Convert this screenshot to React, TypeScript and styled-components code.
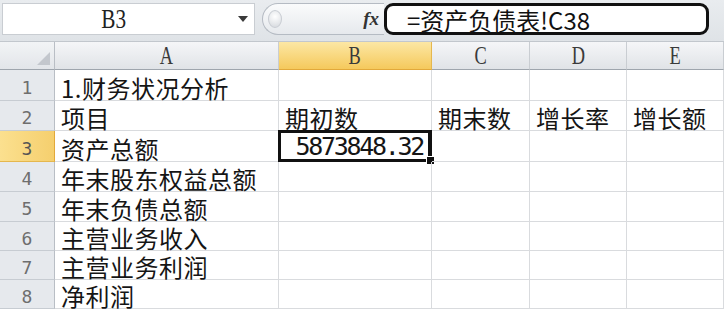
import React, { FC } from "react"
import styled, { createGlobalStyle, css } from "styled-components"

const GlobalStyle = createGlobalStyle`
  html, body {
    margin: 0;
    padding: 0;
    background: #ffffff;
    overflow: hidden;
  }
`

const cjk = `"Noto Sans CJK SC", "Noto Sans", sans-serif`
const latinSerif = `"Liberation Serif", "DejaVu Serif", serif`

const Window = styled.div`
  width: 724px;
  height: 312px;
  display: flex;
  flex-direction: column;
  overflow: hidden;
  background: #ffffff;
`

const FormulaBar = styled.div`
  height: 42px;
  flex: none;
  box-sizing: border-box;
  padding: 3px 15px 6px 2px;
  display: flex;
  align-items: stretch;
  background: linear-gradient(#e9ecef, #dfe3e7);
  border-bottom: 1px solid #c2c7cd;
`

const NameBox = styled.div`
  width: 253px;
  box-sizing: border-box;
  background: #ffffff;
  border: 1px solid #c9cdd2;
  display: flex;
  align-items: center;
  font-family: ${latinSerif};
  font-size: 25px;
  color: #222;
`

const NameText = styled.span`
  flex: 1;
  text-align: center;
  padding-right: 16px;
  transform: scale(0.85, 1.1);
`

const DropArrow = styled.span`
  width: 0;
  height: 0;
  margin-right: 6px;
  border-left: 5px solid transparent;
  border-right: 5px solid transparent;
  border-top: 6px solid #3a3a3a;
`

const FxPill = styled.div`
  margin-left: 7px;
  width: 122px;
  box-sizing: border-box;
  border: 1px solid #b5bbc3;
  border-right: none;
  border-radius: 17px 0 0 17px;
  background: linear-gradient(#fafbfc, #e6e9ed);
  display: flex;
  align-items: center;
  justify-content: space-between;
  padding: 0 5px 0 5px;
`

const Knob = styled.span`
  width: 12px;
  height: 16px;
  border-radius: 50%;
  background: radial-gradient(circle at 50% 35%, #ffffff, #d3d7dc);
  border: 1px solid #c8ccd2;
`

const FxLabel = styled.span`
  font-family: "Liberation Serif", "DejaVu Serif", serif;
  font-style: italic;
  font-weight: bold;
  font-size: 19px;
  color: #333;
`

const FormulaInput = styled.div`
  flex: 1;
  background: #ffffff;
  border: 3px solid #111111;
  border-radius: 9px;
  display: flex;
  align-items: center;
  padding-left: 20px;
  font-family: ${cjk};
  font-size: 24px;
  color: #111;
`

const Sheet = styled.div`
  display: grid;
  grid-template-columns: 55px 224px 153px 98px 97px 97px;
  grid-template-rows: 28px 31px 30px 31px 30px 30px 29px 29px 29px;
  position: relative;
`

const headerBase = css`
  box-sizing: border-box;
  display: flex;
  align-items: center;
  justify-content: center;
  color: #4d4d4d;
`

const CornerCell = styled.div`
  ${headerBase};
  position: relative;
  background: linear-gradient(#f2f4f6, #e2e5e9);
  border-right: 1px solid #b9bec5;
  border-bottom: 1px solid #9ea5ad;
  &::after {
    content: "";
    position: absolute;
    right: 4px;
    bottom: 4px;
    width: 13px;
    height: 13px;
    background: #c3c7cd;
    clip-path: polygon(100% 0, 100% 100%, 0 100%);
  }
`

const ColHeader = styled.div<{ $active?: boolean }>`
  ${headerBase};
  font-family: ${latinSerif};
  font-size: 23px;
  color: #3a3a3a;
  background: ${({ $active }) =>
    $active
      ? "linear-gradient(#fce7a4, #f5c95c)"
      : "linear-gradient(#f5f6f8, #e0e3e7)"};
  border-right: 1px solid ${({ $active }) => ($active ? "#e5b74e" : "#c9cdd2")};
  border-bottom: 1px solid ${({ $active }) => ($active ? "#e2a93a" : "#9ea5ad")};
  span {
    padding-top: 2px;
    transform: scale(0.8, 1.05);
  }
`

const RowHeader = styled.div<{ $active?: boolean }>`
  ${headerBase};
  font-family: "DejaVu Sans Mono", monospace;
  font-size: 18px;
  padding-top: 4px;
  color: ${({ $active }) => ($active ? "#555" : "#6e6e6e")};
  background: ${({ $active }) =>
    $active ? "linear-gradient(90deg, #fbe08f, #f5cf6e)" : "#e6e9ed"};
  border-right: 1px solid ${({ $active }) => ($active ? "#e2a93a" : "#b9bec5")};
  border-bottom: 1px solid ${({ $active }) => ($active ? "#e5b74e" : "#c7ccd2")};
`

const Cell = styled.div<{ $align?: "left" | "right"; $selected?: boolean }>`
  box-sizing: border-box;
  position: relative;
  display: flex;
  align-items: flex-end;
  justify-content: ${({ $align }) => ($align === "right" ? "flex-end" : "flex-start")};
  padding: 0 6px 0 6px;
  border-right: 1px solid #d9dbde;
  border-bottom: 1px solid #d9dbde;
  font-family: ${cjk};
  font-size: 24px;
  line-height: 24px;
  letter-spacing: 0.5px;
  color: #151515;
  white-space: nowrap;
  ${({ $selected }) =>
    $selected &&
    css`
      &::before {
        content: "";
        position: absolute;
        left: -1px;
        top: -1px;
        right: -1px;
        bottom: -1px;
        border: 3px solid #111;
        border-right-width: 4px;
        pointer-events: none;
      }
      &::after {
        content: "";
        position: absolute;
        right: -4px;
        bottom: -4px;
        width: 7px;
        height: 7px;
        background: #111;
        border: 1px solid #fff;
      }
    `}
`

const NumberText = styled.span`
  font-family: "DejaVu Sans Mono", monospace;
  font-size: 25px;
  letter-spacing: -2.3px;
  line-height: 24px;
  margin-bottom: 2px;
  padding-right: 2px;
`

type CellValue = string | { num: string }

const columns = ["A", "B", "C", "D", "E"]

const rows: CellValue[][] = [
  ["1.财务状况分析", "", "", "", ""],
  ["项目", "期初数", "期末数", "增长率", "增长额"],
  ["资产总额", { num: "5873848.32" }, "", "", ""],
  ["年末股东权益总额", "", "", "", ""],
  ["年末负债总额", "", "", "", ""],
  ["主营业务收入", "", "", "", ""],
  ["主营业务利润", "", "", "", ""],
  ["净利润", "", "", "", ""],
]

const activeCol = "B"
const activeRow = 3

const App: FC = () => {
  return (
    <Window>
      <GlobalStyle />
      <FormulaBar>
        <NameBox>
          <NameText>B3</NameText>
          <DropArrow />
        </NameBox>
        <FxPill>
          <Knob />
          <FxLabel>fx</FxLabel>
        </FxPill>
        <FormulaInput>=资产负债表!C38</FormulaInput>
      </FormulaBar>
      <Sheet>
        <CornerCell />
        {columns.map((c) => (
          <ColHeader key={c} $active={c === activeCol}>
            <span>{c}</span>
          </ColHeader>
        ))}
        {rows.map((row, i) => {
          const rowNo = i + 1
          return (
            <React.Fragment key={rowNo}>
              <RowHeader $active={rowNo === activeRow}>{rowNo}</RowHeader>
              {row.map((v, j) => {
                const selected = rowNo === activeRow && columns[j] === activeCol
                if (typeof v === "object") {
                  return (
                    <Cell key={j} $align="right" $selected={selected}>
                      <NumberText>{v.num}</NumberText>
                    </Cell>
                  )
                }
                return (
                  <Cell key={j} $selected={selected}>
                    {v}
                  </Cell>
                )
              })}
            </React.Fragment>
          )
        })}
      </Sheet>
    </Window>
  )
}

export default App
